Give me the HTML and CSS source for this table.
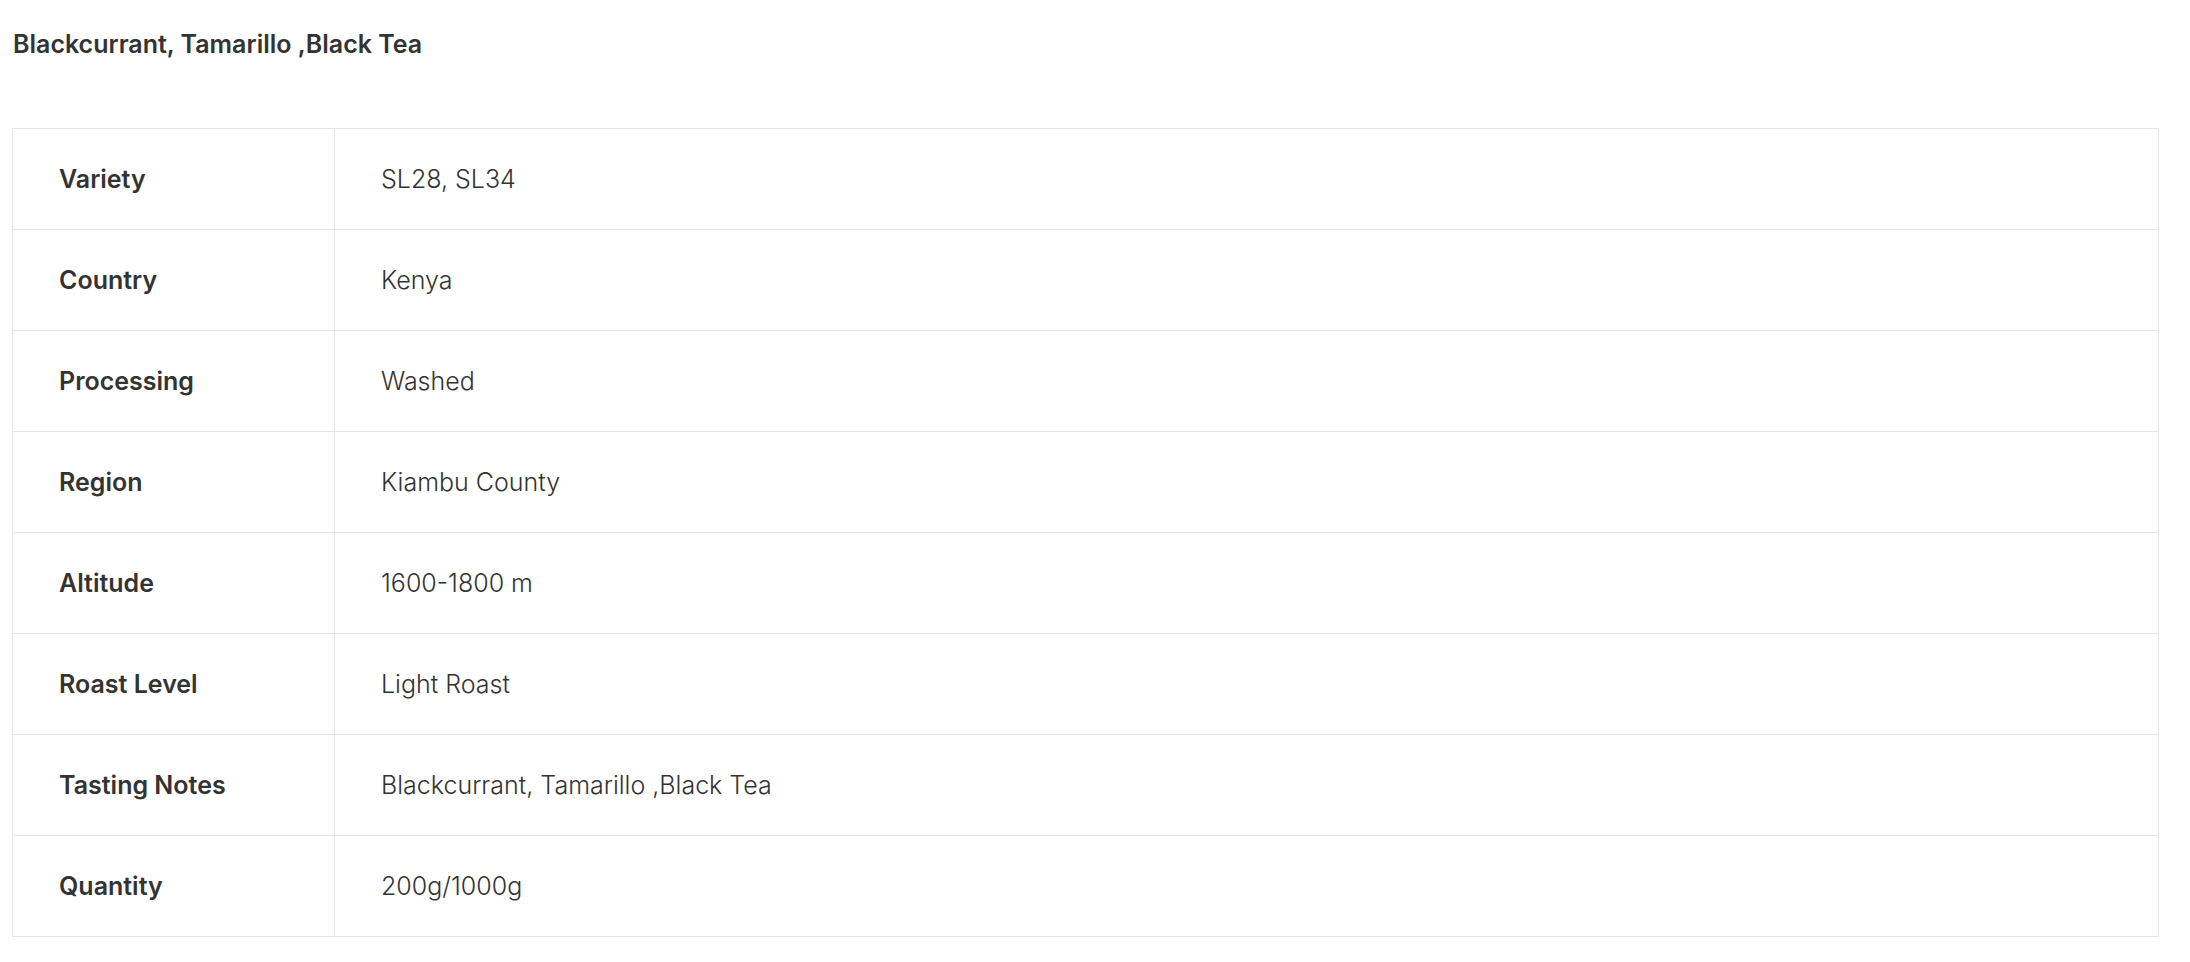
FILE: index.html
```html
<!DOCTYPE html>
<html>
<head>
<meta charset="utf-8">
<link rel="stylesheet" href="styles.css">
</head>
<body>
<div class="page">
  <h2 class="title">Blackcurrant, Tamarillo ,Black Tea</h2>
  <table class="specs">
    <tr><th>Variety</th><td>SL28, SL34</td></tr>
    <tr><th>Country</th><td>Kenya</td></tr>
    <tr><th>Processing</th><td>Washed</td></tr>
    <tr><th>Region</th><td>Kiambu County</td></tr>
    <tr><th>Altitude</th><td>1600-1800 m</td></tr>
    <tr><th>Roast Level</th><td>Light Roast</td></tr>
    <tr><th>Tasting Notes</th><td>Blackcurrant, Tamarillo ,Black Tea</td></tr>
    <tr><th>Quantity</th><td>200g/1000g</td></tr>
  </table>
</div>
</body>
</html>
```
FILE: styles.css
```css
html, body {
  margin: 0;
  padding: 0;
  background: #fff;
}
body {
  font-family: Inter, "Noto Sans", sans-serif;
  color: #333;
}
.page {
  padding: 0 31px 0 12px;
}
.title {
  margin: 0;
  padding-top: 28px;
  height: 128px;
  box-sizing: border-box;
  font-size: 25px;
  line-height: 32px;
  font-weight: 600;
  color: #333;
  padding-left: 1px;
}
.specs {
  width: 100%;
  border-collapse: collapse;
  border: 1px solid #e5e5e5;
}
.specs th,
.specs td {
  border: 1px solid #e5e5e5;
  height: 100px;
  padding: 0 46px;
  font-size: 25px;
  text-align: left;
  vertical-align: middle;
}
.specs th {
  width: 229px;
  font-weight: 600;
  color: #333;
}
.specs td {
  font-weight: 300;
  color: #333;
}
```
